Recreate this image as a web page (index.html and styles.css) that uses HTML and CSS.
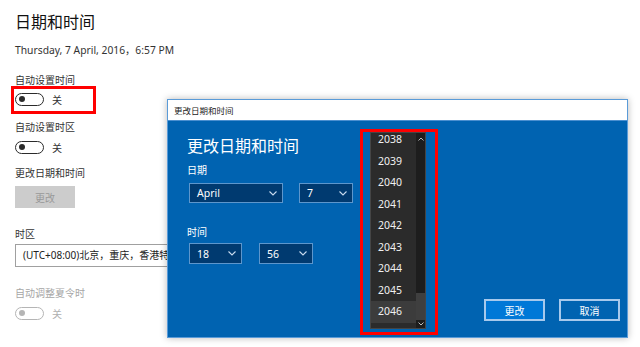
FILE: index.html
```html
<!DOCTYPE html>
<html lang="zh">
<head>
<meta charset="utf-8">
<title>日期和时间</title>
<link rel="stylesheet" href="styles.css">
</head>
<body>
<main class="page">
  <h1 class="page-title">日期和时间</h1>
  <div class="now">Thursday, 7 April, 2016，6:57 PM</div>

  <div class="label l-first">自动设置时间</div>
  <div class="toggle-row tr-1"><span class="toggle"><span class="dot"></span></span><span class="state">关</span></div>

  <div class="label l-2">自动设置时区</div>
  <div class="toggle-row tr-2"><span class="toggle"><span class="dot"></span></span><span class="state">关</span></div>

  <div class="label l-3">更改日期和时间</div>
  <div class="gray-btn">更改</div>

  <div class="label l-4">时区</div>
  <div class="tz-select">(UTC+08:00)北京，重庆，香港特别行政区</div>

  <div class="label l-5 disabled">自动调整夏令时</div>
  <div class="toggle-row tr-2 disabled"><span class="toggle"><span class="dot"></span></span><span class="state">关</span></div>

  <div class="mark mark-left"></div>
</main>

<section class="dialog">
  <header class="dlg-title">更改日期和时间</header>
  <div class="dlg-body">
    <h2 class="dlg-heading">更改日期和时间</h2>
    <div class="dlg-label">日期</div>
    <div class="dd-row dd-row-date">
      <div class="dd dd-month"><span>April</span><svg class="chev" viewBox="0 0 8 5" width="8" height="5"><polyline points="0.5,0.5 4,4 7.5,0.5"/></svg></div>
      <div class="dd dd-day"><span>7</span><svg class="chev" viewBox="0 0 8 5" width="8" height="5"><polyline points="0.5,0.5 4,4 7.5,0.5"/></svg></div>
    </div>
    <div class="dlg-label dlg-label-time">时间</div>
    <div class="dd-row dd-row-time">
      <div class="dd dd-hour"><span>18</span><svg class="chev" viewBox="0 0 8 5" width="8" height="5"><polyline points="0.5,0.5 4,4 7.5,0.5"/></svg></div>
      <div class="dd dd-min"><span>56</span><svg class="chev" viewBox="0 0 8 5" width="8" height="5"><polyline points="0.5,0.5 4,4 7.5,0.5"/></svg></div>
    </div>
    <div class="dlg-buttons">
      <div class="dlg-btn primary">更改</div>
      <div class="dlg-btn">取消</div>
    </div>

    <div class="year-list">
      <div class="years">
        <div class="year">2038</div>
        <div class="year">2039</div>
        <div class="year">2040</div>
        <div class="year">2041</div>
        <div class="year">2042</div>
        <div class="year">2043</div>
        <div class="year">2044</div>
        <div class="year">2045</div>
        <div class="year sel">2046</div>
      </div>
      <div class="scrollbar">
        <svg class="arrow" viewBox="0 0 6 4" width="6" height="4"><polyline points="0.5,3.5 3,1 5.5,3.5"/></svg>
        <div class="thumb"></div>
        <svg class="arrow" viewBox="0 0 6 4" width="6" height="4"><polyline points="0.5,0.5 3,3 5.5,0.5"/></svg>
      </div>
    </div>
    <div class="mark mark-years"></div>
  </div>
</section>
</body>
</html>
```

FILE: styles.css
```css
* { box-sizing: border-box; margin: 0; padding: 0; }

html, body {
  width: 640px;
  height: 347px;
  overflow: hidden;
  background: #ffffff;
  font-family: "Noto Sans", "Noto Sans CJK SC", sans-serif;
  color: #1f1f1f;
}

.page {
  position: relative;
  padding: 7px 15px 0 15px;
  height: 347px;
}

.page-title {
  font-family: "Noto Sans CJK SC", sans-serif;
  font-weight: 400;
  font-size: 16px;
  line-height: 28px;
  color: #111;
}

.now {
  margin-top: 7px;
  font-size: 10.3px;
  line-height: 16px;
  color: #333;
}

.label {
  font-family: "Noto Sans CJK SC", sans-serif;
  font-size: 10px;
  line-height: 16px;
  color: #333;
}
.l-first { margin-top: 14px; }
.l-2 { margin-top: 10px; }
.l-3 { margin-top: 8px; }
.l-4 { margin-top: 18px; }
.l-5 { margin-top: 18px; }
.label.disabled { color: #a6a6a6; }

.toggle-row {
  display: flex;
  align-items: center;
  height: 20px;
  gap: 8px;
}
.tr-1 { margin-top: 1px; }
.tr-2 { margin-top: 2px; }

.toggle {
  width: 29px;
  height: 13px;
  border: 1.5px solid #2b2b2b;
  border-radius: 7px;
  display: flex;
  align-items: center;
  padding-left: 2.5px;
}
.dot {
  width: 6px;
  height: 6px;
  border-radius: 50%;
  background: #2b2b2b;
}
.state {
  font-family: "Noto Sans CJK SC", sans-serif;
  font-size: 10px;
  color: #333;
}
.toggle-row.disabled .toggle { border-color: #b5b5b5; }
.toggle-row.disabled .dot { background: #b5b5b5; }
.toggle-row.disabled .state { color: #b0b0b0; }

.gray-btn {
  margin-top: 5px;
  width: 60px;
  height: 22px;
  background: #cccccc;
  color: #999999;
  font-family: "Noto Sans CJK SC", sans-serif;
  font-size: 10px;
  display: flex;
  align-items: center;
  justify-content: center;
}

.tz-select {
  margin-top: 2px;
  width: 152px;
  height: 23px;
  border: 1px solid #a0a0a0;
  border-right: none;
  padding-left: 7px;
  font-size: 10px;
  line-height: 21px;
  white-space: nowrap;
  overflow: hidden;
  color: #222;
}

.mark {
  position: absolute;
  border: 3px solid #ff0000;
}
.mark-left {
  left: 11px;
  top: 86px;
  width: 85px;
  height: 28px;
}

/* dialog */
.dialog {
  position: absolute;
  left: 167px;
  top: 99px;
  width: 461px;
  height: 239px;
  border: 1px solid #5a9bd8;
  box-shadow: 0 0 7px rgba(0, 0, 0, 0.28);
  display: flex;
  flex-direction: column;
  background: #0063b1;
}

.dlg-title {
  height: 21px;
  background: #ffffff;
  font-family: "Noto Sans CJK SC", sans-serif;
  font-size: 8.5px;
  line-height: 20px;
  padding-left: 6px;
  color: #222;
  border-bottom: 1px solid #4a8fd0;
}

.dlg-body {
  position: relative;
  flex: 1;
  display: flex;
  flex-direction: column;
  padding: 13px 7px 16px 19px;
  color: #ffffff;
}

.dlg-heading {
  font-family: "Noto Sans CJK SC", sans-serif;
  font-weight: 400;
  font-size: 16px;
  line-height: 22px;
}

.dlg-label {
  margin-top: 7px;
  font-family: "Noto Sans CJK SC", sans-serif;
  font-size: 10px;
  line-height: 14px;
}
.dlg-label-time { margin-top: 22px; }

.dd-row {
  display: flex;
  margin-top: 6px;
  margin-left: 2px;
}
.dd-row-date { gap: 16px; }
.dd-row-time { gap: 17px; margin-top: 4px; }

.dd {
  height: 20px;
  background: #003a70;
  border: 1.5px solid #5d96cc;
  display: flex;
  align-items: center;
  justify-content: space-between;
  padding: 0 5px 0 7px;
  font-size: 10.5px;
  color: #fff;
}
.dd-row-time .dd { height: 21px; }
.dd-month { width: 94px; }
.dd-day { width: 54px; }
.dd-hour { width: 53px; }
.dd-min { width: 54px; }

.chev polyline {
  fill: none;
  stroke: #c9dcef;
  stroke-width: 1.1;
}

.dlg-buttons {
  margin-top: auto;
  display: flex;
  justify-content: flex-end;
  gap: 14px;
}
.dlg-btn {
  width: 61px;
  height: 22px;
  border: 2px solid #a7c9ec;
  display: flex;
  align-items: center;
  justify-content: center;
  font-family: "Noto Sans CJK SC", sans-serif;
  font-size: 10px;
  color: #fff;
}
.dlg-btn.primary { background: #0078d7; }

/* year popup */
.year-list {
  position: absolute;
  left: 202px;
  top: 11px;
  width: 56px;
  height: 197px;
  background: #2b2b2b;
  border: 1px solid #454545;
  display: flex;
  overflow: hidden;
}
.years {
  flex: 1;
  margin-top: -4px;
}
.year {
  height: 21.5px;
  line-height: 21.5px;
  padding-left: 7px;
  font-size: 10.5px;
  color: #f0f0f0;
}
.year.sel { background: #3c3c3c; }

.scrollbar {
  width: 9px;
  background: #1d1d1d;
  display: flex;
  flex-direction: column;
  align-items: center;
  padding: 4px 0 2px 0;
}
.scrollbar .thumb {
  margin-top: auto;
  width: 9px;
  height: 27px;
  background: #3f3f3f;
  margin-bottom: 2px;
}
.scrollbar .arrow polyline {
  fill: none;
  stroke: #bdbdbd;
  stroke-width: 1;
}

.mark-years {
  left: 192px;
  top: 8px;
  width: 78px;
  height: 206px;
}
```
